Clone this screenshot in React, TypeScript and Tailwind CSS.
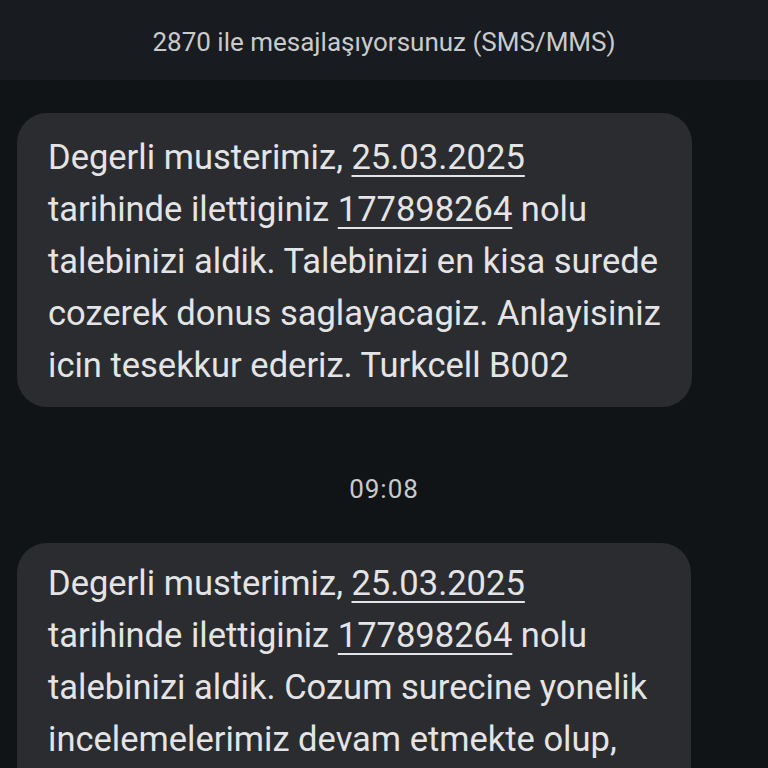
import React from "react";

const U = ({ children }: { children: React.ReactNode }) => (
  <span className="underline decoration-[2px] underline-offset-[6px]">{children}</span>
);

export default function App() {
  return (
    <div
      className="w-[768px] h-[768px] overflow-hidden bg-[#111417] flex flex-col"
      style={{ fontFamily: "Roboto, 'Noto Sans', sans-serif" }}
    >
      <div className="h-[80px] shrink-0 bg-[#181b1f] flex items-center justify-center pt-[4px]">
        <span className="text-[26px] text-[#c9cacc]">2870 ile mesajlaşıyorsunuz (SMS/MMS)</span>
      </div>
      <div className="flex flex-col pt-[33px]">
        <div className="ml-[17px] w-[675px] rounded-[30px] bg-[#2a2c30] pl-[31px] pr-[10px] pt-[18px] pb-[16px] text-[34.5px] leading-[52px] text-[#e4e4e6] whitespace-nowrap">
          Degerli musterimiz, <U>25.03.2025</U>
          <br />
          tarihinde ilettiginiz <U>177898264</U> nolu
          <br />
          talebinizi aldik. Talebinizi en kisa surede
          <br />
          cozerek donus saglayacagiz. Anlayisiniz
          <br />
          icin tesekkur ederiz. Turkcell B002
        </div>
        <div className="pt-[68px] pb-[40px] flex justify-center">
          <span className="text-[26px] leading-[28px] tracking-[1px] text-[#c9cacc]">09:08</span>
        </div>
        <div className="ml-[17px] w-[674px] rounded-t-[30px] bg-[#2a2c30] pl-[31px] pr-[10px] pt-[14px] pb-[60px] text-[34.5px] leading-[52px] text-[#e4e4e6] whitespace-nowrap">
          Degerli musterimiz, <U>25.03.2025</U>
          <br />
          tarihinde ilettiginiz <U>177898264</U> nolu
          <br />
          talebinizi aldik. Cozum surecine yonelik
          <br />
          incelemelerimiz devam etmekte olup,
        </div>
      </div>
    </div>
  );
}
